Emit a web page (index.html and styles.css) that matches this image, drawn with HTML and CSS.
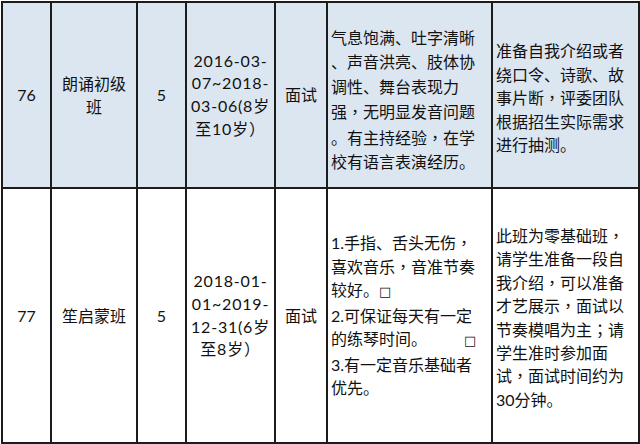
FILE: index.html
```html
<!DOCTYPE html>
<html lang="zh-CN">
<head>
<meta charset="utf-8">
<link rel="stylesheet" href="styles.css">
</head>
<body>
<table class="sheet">
  <colgroup>
    <col class="c-no">
    <col class="c-name">
    <col class="c-num">
    <col class="c-date">
    <col class="c-way">
    <col class="c-req">
    <col class="c-note">
  </colgroup>
  <tbody>
    <tr class="row row-a">
      <td class="cell center">76</td>
      <td class="cell center">朗诵初级<br>班</td>
      <td class="cell center">5</td>
      <td class="cell center date">2016-03-<br>07~2018-<br>03-06(8岁<br>至10岁）</td>
      <td class="cell center">面试</td>
      <td class="cell left req">气息饱满、吐字清晰<br>、声音洪亮、肢体协<br>调性、舞台表现力<br>强<span class="p" lang="zh-TW">，</span>无明显发音问题<br>。有主持经验<span class="p" lang="zh-TW">，</span>在学<br>校有语言表演经历。</td>
      <td class="cell left note">准备自我介绍或者<br>绕口令、诗歌、故<br>事片断<span class="p" lang="zh-TW">，</span>评委团队<br>根据招生实际需求<br>进行抽测。</td>
    </tr>
    <tr class="row row-b">
      <td class="cell center">77</td>
      <td class="cell center">笙启蒙班</td>
      <td class="cell center">5</td>
      <td class="cell center date">2018-01-<br>01~2019-<br>12-31(6岁<br>至8岁）</td>
      <td class="cell center">面试</td>
      <td class="cell left req">1.手指、舌头无伤<span class="p" lang="zh-TW">，</span><br>喜欢音乐<span class="p" lang="zh-TW">，</span>音准节奏<br>较好。<span class="box">□</span><br>2.可保证每天有一定<br>的练琴时间。<span class="box gap">□</span><br>3.有一定音乐基础者<br>优先。</td>
      <td class="cell left note">此班为零基础班<span class="p" lang="zh-TW">，</span><br>请学生准备一段自<br>我介绍<span class="p" lang="zh-TW">，</span>可以准备<br>才艺展示<span class="p" lang="zh-TW">，</span>面试以<br>节奏模唱为主<span class="p" lang="zh-TW">；</span>请<br>学生准时参加面<br>试<span class="p" lang="zh-TW">，</span>面试时间约为<br>30分钟。</td>
    </tr>
  </tbody>
</table>
</body>
</html>
```

FILE: styles.css
```css
html, body {
  margin: 0;
  padding: 0;
  background: #ffffff;
}

body {
  padding: 1px 0 0 1px;
  font-family: "Lato", "Noto Sans CJK SC", sans-serif;
  font-size: 16px;
  color: #111111;
}

.sheet {
  border-collapse: collapse;
  table-layout: fixed;
  width: 637px;
}

.c-no { width: 49px; }
.c-name { width: 86px; }
.c-num { width: 49px; }
.c-date { width: 89px; }
.c-way { width: 52px; }
.c-req { width: 165px; }
.c-note { width: 147px; }

.cell {
  border: 2px solid #1c1c1c;
  padding: 0 2px;
  vertical-align: middle;
  white-space: nowrap;
  line-height: 23.5px;
}

.row-a {
  height: 186px;
  background: #dce6f1;
}

.row-b {
  height: 255px;
  background: #ffffff;
}

.center { text-align: center; }
.left { text-align: left; }

.date {
  line-height: 22.7px;
  letter-spacing: 0.8px;
}

.req { padding-left: 3px; }
.row-a .req { line-height: 24.5px; padding-top: 10px; }
.note { padding-left: 3px; line-height: 23.4px; }
.row-a .note { padding-top: 6px; }
.row-b .note { padding-top: 4px; }

.p {
  font-family: "Noto Sans CJK TC", sans-serif;
  letter-spacing: 0;
}

.box {
  font-family: "DejaVu Sans", sans-serif;
  font-size: 13px;
}

.gap { margin-left: 37px; }
```
